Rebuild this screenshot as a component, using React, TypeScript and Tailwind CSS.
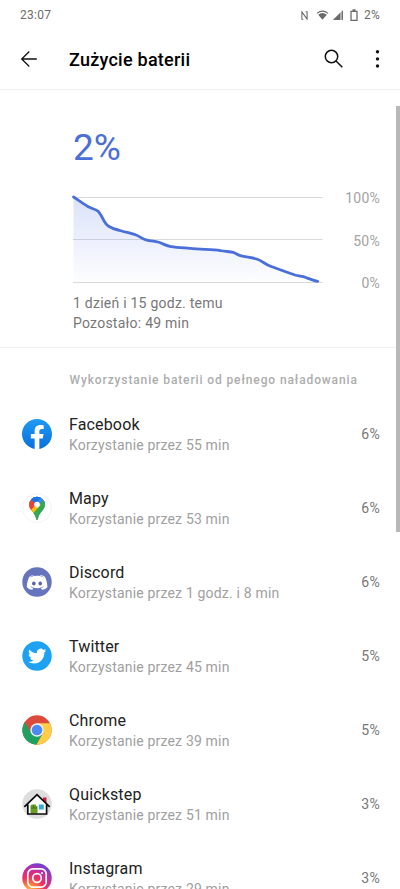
import type { ReactNode } from 'react';

const LINE =
  'M1.5 7 C6 10 11 13.500 16.3 16.800 C20 18.600 23 19 26.3 21.300 C29 24.500 29.500 26.500 31.3 29.500 C33 32.500 34 35 36.3 36 C40 38.500 45 39.800 49.7 41 C55 42.500 60 43.500 64 45 C68 46.300 70 49 74 49.800 C78 50.800 82 51.200 86 52 C91 53.500 94 56 99 56.600 C105 57.500 112 57.800 118 58.300 C128 59.300 140 59.600 148 60.500 C153 61.500 158 61.500 161.300 62.300 C164 63.200 165 64.800 168.300 65.600 C174 67 180 67.600 184.700 69 C190 70.800 193 74 198 76 C206 79 215 82.300 223 85 C226 85.800 228 85.800 231.300 86.600 C236 88.200 240 90.200 245.700 91.300';

function Facebook() {
  return (
    <svg viewBox="0 0 24 24" className="size-[30px]">
      <defs>
        <linearGradient id="fb" x1="0" y1="0" x2="0" y2="1">
          <stop offset="0" stopColor="#1d9bf3" />
          <stop offset="1" stopColor="#0a6fdd" />
        </linearGradient>
      </defs>
      <path
        fill="url(#fb)"
        d="M24 12.073c0-6.627-5.373-12-12-12s-12 5.373-12 12c0 5.99 4.388 10.954 10.125 11.854v-8.385H7.078v-3.47h3.047V9.43c0-3.007 1.792-4.669 4.533-4.669 1.312 0 2.686.235 2.686.235v2.953H15.83c-1.491 0-1.956.925-1.956 1.874v2.25h3.328l-.532 3.47h-2.796v8.385C19.612 23.027 24 18.062 24 12.073z"
      />
    </svg>
  );
}

function Maps() {
  return (
    <svg viewBox="0 0 30 30" className="size-[30px]">
      <defs>
        <clipPath id="pin">
          <path d="M15 3.700a7.900 7.900 0 0 0-7.900 7.900c0 2.700 1.200 4.400 2.900 6.400 2.100 2.500 3.300 4.200 4 7.200.2 1 .4 1.500 1 1.500s.8-.5 1-1.500c.7-3 1.900-4.700 4-7.200 1.700-2 2.900-3.700 2.900-6.400A7.900 7.900 0 0 0 15 3.700z" />
        </clipPath>
      </defs>
      <circle cx="15" cy="15" r="14.500" fill="#fff" stroke="#f0f0f0" strokeWidth=".8" />
      <g clipPath="url(#pin)">
        <path fill="#34a853" d="M0 0h30v30H0z" />
        <path fill="#4285f4" d="M9 6.500 L12 0H30V4L15 18 12 11.600z" />
        <path fill="#34a853" d="M22 6.300 L9.500 19.500 12 30H30V5z" />
        <path fill="#fbbc04" d="M12.500 12.500 L5.500 20.500 11 20.500 19 11.600z" />
        <path fill="#ea4335" d="M9 6.500 L14.500 11 7.500 18.500 5 12z" />
        <path fill="#1a73e8" d="M14 0 L8.900 6.500 13.500 10.500 19.500 4z" />
      </g>
      <circle cx="15" cy="11.600" r="2.800" fill="#fff" />
    </svg>
  );
}

function Discord() {
  return (
    <svg viewBox="0 0 30 30" className="size-[30px]">
      <circle cx="15" cy="15" r="14.700" fill="#6674bd" />
      <g transform="translate(-.4 -.3) scale(.0688)">
        <path
          fill="#fff"
          d="M375.040 295.424c0-82.432-36.864-149.248-36.864-149.248-36.864-27.648-71.936-26.880-71.936-26.880l-3.584 4.096c43.520 13.312 63.744 32.512 63.744 32.512-60.811-33.329-132.244-33.335-191.232-7.424-9.472 4.352-15.104 7.424-15.104 7.424s21.248-20.224 67.328-33.536l-2.560-3.072s-35.072-.768-71.936 26.880c0 0-36.864 66.816-36.864 149.248 0 0 21.504 37.120 78.080 38.912 0 0 9.472-11.520 17.152-21.248-32.512-9.728-44.800-30.208-44.800-30.208 3.766 2.636 9.976 6.053 10.496 6.400 43.210 24.198 104.588 32.126 159.744 8.960 8.960-3.328 18.944-8.192 29.440-15.104 0 0-12.800 20.992-46.336 30.464 7.680 9.728 16.896 20.736 16.896 20.736 56.576-1.792 78.336-38.912 78.336-38.912z"
        />
        <ellipse cx="177.700" cy="243.200" rx="26" ry="28.400" fill="#5564ad" />
        <ellipse cx="271.100" cy="243.200" rx="26" ry="28.400" fill="#5564ad" />
      </g>
    </svg>
  );
}

function Twitter() {
  return (
    <svg viewBox="0 0 30 30" className="size-[30px]">
      <circle cx="15" cy="15" r="14.700" fill="#1da1f2" />
      <path
        transform="translate(6 6) scale(.76)"
        fill="#fff"
        d="M23.953 4.570a10 10 0 01-2.825.775 4.958 4.958 0 002.163-2.723c-.951.555-2.005.959-3.127 1.184a4.920 4.920 0 00-8.384 4.482C7.690 8.095 4.067 6.130 1.640 3.162a4.822 4.822 0 00-.666 2.475c0 1.710.870 3.213 2.188 4.096a4.904 4.904 0 01-2.228-.616v.060a4.923 4.923 0 003.946 4.827 4.996 4.996 0 01-2.212.085 4.936 4.936 0 004.604 3.417 9.867 9.867 0 01-6.102 2.105c-.390 0-.779-.023-1.170-.067a13.995 13.995 0 007.557 2.209c9.053 0 13.998-7.496 13.998-13.985 0-.210 0-.420-.015-.630A9.935 9.935 0 0024 4.590z"
      />
    </svg>
  );
}

function Chrome() {
  return (
    <svg viewBox="1.500 1.500 45 45" className="size-[30px]">
      <circle cx="24" cy="24" r="22" fill="#dc4a3d" />
      <path fill="#ffcd46" d="M43.600 14H24L32.660 29 22.860 45.970A22 22 0 0 0 43.600 14z" />
      <path fill="#1da261" d="M22.860 45.970L32.660 29H15.340L5.540 12.030A22 22 0 0 0 22.860 45.970z" />
      <circle cx="24" cy="24" r="10" fill="#f4f4f4" />
      <circle cx="24" cy="24" r="8" fill="#4a8af4" />
    </svg>
  );
}

function Quickstep() {
  return (
    <svg viewBox="0 0 30 30" className="size-[30px]">
      <circle cx="15" cy="15" r="14.700" fill="#dedede" />
      <path d="M21 8.500h3.500V15L21 12z" fill="#c4203c" />
      <path d="M6 15.500L15 7l9.500 8.500V25H6z" fill="#fff" />
      <path d="M8.500 16.500l1.500-1h4v1.500h1.500v7.500h-7z" fill="#6a9e28" />
      <path d="M9 19h6M11.500 16v3" stroke="#3f6d18" strokeWidth=".8" />
      <path d="M16.800 15.500h5v5h-5z" fill="#38a9dc" />
      <path d="M2.300 17.800L15 5.700l12.700 12.100M5.800 15.500v9.500h18.800v-9.500" fill="none" stroke="#0b0b0b" strokeWidth="1.700" />
    </svg>
  );
}

function Instagram() {
  return (
    <svg viewBox="0 0 30 30" className="size-[30px]">
      <defs>
        <radialGradient id="ig" cx=".25" cy="1" r="1.050">
          <stop offset="0" stopColor="#fed350" />
          <stop offset=".25" stopColor="#fb8b3a" />
          <stop offset=".5" stopColor="#ee3060" />
          <stop offset=".75" stopColor="#c62ca0" />
          <stop offset="1" stopColor="#6a42d4" />
        </radialGradient>
      </defs>
      <circle cx="15" cy="15" r="14.700" fill="url(#ig)" />
      <g fill="none" stroke="#fff" strokeWidth="1.700">
        <rect x="5.800" y="5.800" width="18.400" height="18.400" rx="5.200" />
        <circle cx="15" cy="15" r="4.300" />
      </g>
      <circle cx="20" cy="10" r="1.100" fill="#fff" />
    </svg>
  );
}

const apps: { name: string; time: string; pct: string; icon: ReactNode }[] = [
  { name: 'Facebook', time: '55 min', pct: '6%', icon: <Facebook /> },
  { name: 'Mapy', time: '53 min', pct: '6%', icon: <Maps /> },
  { name: 'Discord', time: '1 godz. i 8 min', pct: '6%', icon: <Discord /> },
  { name: 'Twitter', time: '45 min', pct: '5%', icon: <Twitter /> },
  { name: 'Chrome', time: '39 min', pct: '5%', icon: <Chrome /> },
  { name: 'Quickstep', time: '51 min', pct: '3%', icon: <Quickstep /> },
  { name: 'Instagram', time: '29 min', pct: '3%', icon: <Instagram /> },
];

function StatusBar() {
  return (
    <div className="flex h-[30px] items-center justify-between pr-5 pl-5 text-[12px] text-[#6b6b6b]">
      <span className="tracking-[0.3px]">23:07</span>
      <div className="flex items-center">
        <svg viewBox="0 0 8 10" className="mr-2 h-[9px] w-[7px]" fill="none" stroke="#6b6b6b" strokeWidth="1.200">
          <path d="M2.600 9.300H1V.8l6 8.400V.8H5.300" />
        </svg>
        <svg viewBox="0 0 14 10" className="mr-[4px] h-[10px] w-[13px]">
          <path d="M1 3.300Q7-1.500 13 3.300" fill="none" stroke="#6b6b6b" strokeWidth="1.200" />
          <path d="M2.300 4.800Q7 1 11.700 4.800L7 10z" fill="#6b6b6b" />
        </svg>
        <svg viewBox="0 0 10 10" className="mr-[7px] h-[10px] w-[10px]">
          <path d="M10 0V10H0z" fill="#6b6b6b" opacity=".55" />
          <path d="M7 3V10H0z" fill="#6b6b6b" />
          <path d="M9.500 1V9.500" stroke="#6b6b6b" />
        </svg>
        <svg viewBox="0 0 8 12" className="mr-[6px] h-3 w-2" fill="none" stroke="#6b6b6b" strokeWidth="1.300">
          <path d="M1 2.300h6v9H1zM2.500 1h3" />
        </svg>
        <span className="tracking-[0.2px]">2%</span>
      </div>
    </div>
  );
}

function AppBar() {
  return (
    <div className="flex h-[60px] items-center border-b border-[#efefef] pl-5">
      <svg viewBox="0 0 18 18" className="-mt-[2px] h-[18px] w-[18px]" fill="none" stroke="#111" strokeWidth="1.300">
        <path d="M16.800 9H1.700M9.300 1.500L1.700 9l7.600 7.500" />
      </svg>
      <h1 className="ml-[31px] flex-1 text-[18px] font-medium tracking-[0.25px] text-black">Zużycie baterii</h1>
      <svg viewBox="0 0 20 20" className="-mt-[2px] mr-[30px] size-5" fill="none" stroke="#111" strokeWidth="1.500">
        <circle cx="7.500" cy="7.500" r="6.200" />
        <path d="M12 12L18.300 18.300" />
      </svg>
      <svg viewBox="0 0 6 20" className="-mt-[2px] mr-[20px] h-5 w-[6px]" fill="#111">
        <circle cx="3.500" cy="2.800" r="1.700" />
        <circle cx="3.500" cy="9.900" r="1.700" />
        <circle cx="3.500" cy="17" r="1.700" />
      </svg>
    </div>
  );
}

function Overview() {
  return (
    <section className="flex h-[258px] flex-col border-b border-[#efefef] pr-5 pl-[72px]">
      <div className="mt-[36px] h-[44px] pl-[1px] text-[37px] leading-[44px] text-[#4a6fd8]">2%</div>
      <div className="mt-[20px] flex h-[98px] justify-between">
        <svg viewBox="0 0 252 98" className="h-[98px] w-[252px]">
          <defs>
            <linearGradient id="area" x1="0" y1="0" x2="0" y2="1">
              <stop offset="0" stopColor="#4a6fe8" stopOpacity=".2" />
              <stop offset="1" stopColor="#4a6fe8" stopOpacity=".01" />
            </linearGradient>
          </defs>
          <path d="M1 7.500H250.500M1 49.500H250.500M1 92.500H250.500" stroke="#d9dadd" />
          <path d={LINE + 'V92H1.500z'} fill="url(#area)" />
          <path d={LINE} fill="none" stroke="#4a6fd8" strokeWidth="2.800" strokeLinecap="round" />
        </svg>
        <div className="-mt-[13px] flex flex-col text-right text-[14px] leading-[42.500px] tracking-[0.25px] text-[#a3a3a3]">
          <span>100%</span>
          <span>50%</span>
          <span>0%</span>
        </div>
      </div>
      <div className="mt-[5px] pl-[1px] text-[14px] leading-5 tracking-[0.24px] text-[#777]">
        <p>1 dzień i 15 godz. temu</p>
        <p>Pozostało: 49 min</p>
      </div>
    </section>
  );
}

export default function App() {
  return (
    <div className="relative h-[889px] w-full overflow-hidden bg-white font-['Roboto',sans-serif]">
      <StatusBar />
      <AppBar />
      <Overview />
      <h2 className="mt-[22px] h-5 pl-[69.500px] text-[12px] leading-5 font-medium tracking-[0.88px] text-[#adadad]">
        Wykorzystanie baterii od pełnego naładowania
      </h2>
      <ul className="mt-[7px]">
        {apps.map((a) => (
          <li key={a.name} className="flex h-[74px] items-center pr-5 pl-[21.500px]">
            <div className="-mt-px">{a.icon}</div>
            <div className="mt-[2px] ml-[17.500px] flex-1">
              <p className="text-[16px] leading-5 tracking-[0.15px] text-[#222]">{a.name}</p>
              <p className="text-[14px] leading-5 tracking-[0.18px] text-[#a0a0a0]">Korzystanie przez {a.time}</p>
            </div>
            <span className="text-[14px] tracking-[0.3px] text-[#777]">{a.pct}</span>
          </li>
        ))}
      </ul>
      <div className="absolute top-[106px] right-0 h-[426px] w-1 bg-[#b8b8b8]" />
    </div>
  );
}
